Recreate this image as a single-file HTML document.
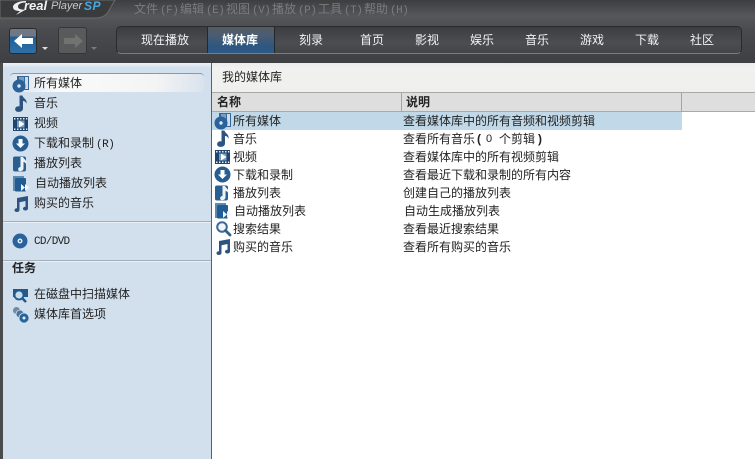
<!DOCTYPE html>
<html lang="zh"><head><meta charset="utf-8"><style>
html,body{margin:0;padding:0}
body{width:755px;height:459px;overflow:hidden;position:relative;background:#fff;font:12px/16px "Liberation Sans","WenQuanYi Zen Hei","Noto Sans CJK SC",sans-serif;color:#222}
.a{position:absolute;white-space:nowrap}
.t{position:absolute;white-space:nowrap;height:16px}
.n{position:absolute;top:32px;width:60px;text-align:center;color:#f2f2f2;white-space:nowrap}
.m{position:absolute;top:1px;color:#7a7c7e;white-space:nowrap}
.l{font:11px/16px "Liberation Mono",monospace;letter-spacing:-.5px;margin-left:2px}
svg{position:absolute;overflow:visible}
</style></head><body>
<!-- header -->
<div class="a" style="left:0;top:0;width:755px;height:63px;background:linear-gradient(#3d3e40 0,#55575a 16px,#4a4b4e 30px,#3e3f42 63px)"></div>
<svg style="left:0;top:0" width="125" height="22"><path d="M0 0H115L108 12Q104 18 96 18H0Z" fill="#3a3b3d" stroke="#68696b" stroke-width="1"/></svg>
<svg style="left:12px;top:0" width="24" height="18"><path d="M14 1C6 1 1 4 1 7C1 10 4 11 8 11L4 15L14 9.500C9 10 6 9 6 6.500C6 4 9 2.500 14 2.500Z" fill="#eee"/></svg>
<div class="a" style="left:24px;top:-2px;font:italic bold 13px/16px 'Liberation Sans',sans-serif;color:#f4f4f4">real</div>
<div class="a" style="left:51px;top:-2px;font:italic 11px/16px 'Liberation Sans',sans-serif;color:#c8c9ca">Player</div>
<div class="a" style="left:84px;top:-2px;font:italic bold 12px/16px 'Liberation Sans',sans-serif;color:#48a8de;letter-spacing:.5px">SP</div>
<div class="m" style="left:134px">文件<span class="l">(F)</span></div><div class="m" style="left:180px">编辑<span class="l">(E)</span></div><div class="m" style="left:226px">视图<span class="l">(V)</span></div><div class="m" style="left:272px">播放<span class="l">(P)</span></div><div class="m" style="left:318px">工具<span class="l">(T)</span></div><div class="m" style="left:364px">帮助<span class="l">(H)</span></div>
<!-- back/forward -->
<div class="a" style="left:9px;top:28px;width:28px;height:26px;box-sizing:border-box;border:1px solid #2b2b2b;border-radius:3px;background:linear-gradient(#6f7883 0,#6f7883 7px,#1f5f99 8px,#2f70a8 25px)"></div>
<svg style="left:13px;top:33px" width="21" height="16"><path d="M9 1L1 8L9 15V11H20V5H9Z" fill="#fff"/></svg>
<svg style="left:42px;top:47px" width="6" height="4"><path d="M0 0H6L3 3Z" fill="#ddd"/></svg>
<div class="a" style="left:58px;top:27px;width:29px;height:27px;box-sizing:border-box;border:1px solid #363636;border-radius:3px;background:#585a5b"></div>
<svg style="left:63px;top:33px" width="21" height="16"><path d="M12 1L20 8L12 15V11H1V5H12Z" fill="#717371"/></svg>
<svg style="left:91px;top:47px" width="6" height="4"><path d="M0 0H6L3 3Z" fill="#77797b"/></svg>
<!-- nav bar -->
<div class="a" style="left:116px;top:26px;width:626px;height:28px;box-sizing:border-box;border:1px solid #2a2b2d;border-bottom:1px solid #7b7c7e;border-radius:5px;background:linear-gradient(#3c3d40,#4b4d50 60%,#444548)"></div>
<div class="a" style="left:207px;top:27px;width:68px;height:26px;box-sizing:border-box;border-left:1px solid #25282b;border-right:1px solid #25282b;background:linear-gradient(#565b61 0,#4b5d72 8px,#2c5781 20px,#2f5a84 26px)"></div>
<div class="n" style="left:135px">现在播放</div><div class="n" style="left:210px;font-weight:bold;color:#fff">媒体库</div><div class="n" style="left:281px">刻录</div><div class="n" style="left:342px">首页</div><div class="n" style="left:397px">影视</div><div class="n" style="left:452px">娱乐</div><div class="n" style="left:507px">音乐</div><div class="n" style="left:562px">游戏</div><div class="n" style="left:617px">下载</div><div class="n" style="left:672px">社区</div>
<!-- sidebar -->
<div class="a" style="left:0;top:63px;width:3px;height:396px;background:#4a4b4d"></div>
<div class="a" style="left:3px;top:63px;width:208px;height:396px;background:#d2e0ee"></div>
<div class="a" style="left:3px;top:63px;width:208px;height:5px;background:linear-gradient(#eef1f4,#d2e0ee)"></div>
<div class="a" style="left:211px;top:63px;width:1px;height:396px;background:#5d6166"></div>
<div class="a" style="left:10px;top:73px;width:194px;height:19px;box-sizing:border-box;border-top:1px solid #8f979f;border-radius:4px;background:linear-gradient(90deg,#d9e3ed,#fafafa 25%,#f4f4f4 75%,#d9e3ed)"></div>
<div class="a" style="left:3px;top:221px;width:208px;height:1px;background:#a3afbb"></div><div class="a" style="left:3px;top:222px;width:208px;height:1px;background:#e7eef5"></div>
<div class="a" style="left:3px;top:260px;width:208px;height:1px;background:#a3afbb"></div><div class="a" style="left:3px;top:261px;width:208px;height:1px;background:#e7eef5"></div>
<div class="t" style="left:34px;top:75px">所有媒体</div><div class="t" style="left:34px;top:95px">音乐</div><div class="t" style="left:34px;top:115px">视频</div><div class="t" style="left:34px;top:135px">下载和录制<span class="l">(R)</span></div><div class="t" style="left:34px;top:155px">播放列表</div><div class="t" style="left:35px;top:175px">自动播放列表</div><div class="t" style="left:34px;top:195px">购买的音乐</div>
<div class="t" style="left:34px;top:234px;font:11px/16px 'Liberation Mono',monospace;letter-spacing:-.7px">CD/DVD</div>
<div class="t" style="left:12px;top:260px;font-weight:bold">任务</div>
<div class="t" style="left:34px;top:286px">在磁盘中扫描媒体</div><div class="t" style="left:34px;top:306px">媒体库首选项</div>
<!-- main -->
<div class="a" style="left:212px;top:63px;width:543px;height:29px;background:linear-gradient(#e9ebee 0,#f1f1ef 5px,#efefed)"></div>
<div class="a" style="left:212px;top:92px;width:543px;height:20px;box-sizing:border-box;border-top:1px solid #a9a9a5;border-bottom:1px solid #a9a9a5;background:#dedede"></div>
<div class="a" style="left:401px;top:92px;width:1px;height:20px;background:#a5a5a0"></div><div class="a" style="left:681px;top:92px;width:1px;height:20px;background:#a5a5a0"></div>
<div class="a" style="left:212px;top:112px;width:470px;height:18px;background:#c0d8e8"></div>
<div class="t" style="left:222px;top:69px">我的媒体库</div>
<div class="t" style="left:217px;top:94px;font-weight:bold">名称</div><div class="t" style="left:406px;top:94px;font-weight:bold">说明</div>
<div class="t" style="left:233px;top:113px">所有媒体</div><div class="t" style="left:403px;top:113px">查看媒体库中的所有音频和视频剪辑</div>
<div class="t" style="left:233px;top:131px">音乐</div><div class="t" style="left:403px;top:131px">查看所有音乐</div><div class="t" style="left:477px;top:131px;font-weight:bold">(</div><div class="t" style="left:486px;top:131px;font:11px/16px 'Liberation Sans',sans-serif">0</div><div class="t" style="left:499px;top:131px">个剪辑</div><div class="t" style="left:538px;top:131px;font-weight:bold">)</div>
<div class="t" style="left:233px;top:149px">视频</div><div class="t" style="left:403px;top:149px">查看媒体库中的所有视频剪辑</div>
<div class="t" style="left:233px;top:167px">下载和录制</div><div class="t" style="left:403px;top:167px">查看最近下载和录制的所有内容</div>
<div class="t" style="left:233px;top:185px">播放列表</div><div class="t" style="left:403px;top:185px">创建自己的播放列表</div>
<div class="t" style="left:234px;top:203px">自动播放列表</div><div class="t" style="left:404px;top:203px">自动生成播放列表</div>
<div class="t" style="left:233px;top:221px">搜索结果</div><div class="t" style="left:403px;top:221px">查看最近搜索结果</div>
<div class="t" style="left:233px;top:239px">购买的音乐</div><div class="t" style="left:403px;top:239px">查看所有购买的音乐</div>
<!-- icons -->
<svg width="0" height="0" style="left:0;top:0"><defs>
<g id="all"><rect x="5" y="1" width="12" height="14" fill="#35689a"/><path d="M13 2h3v12h-3z" fill="#cfdde9"/><path d="M7 2h5v5H7z" fill="#7c9dbc"/><circle cx="7" cy="11" r="6.500" fill="#2a6299"/><circle cx="7" cy="11" r="1.700" fill="#dce8f2"/></g>
<g id="mus"><path d="M6.500 0.500h3c.5 3 5 3.500 4 8.500C13 6.500 11 6 10 6V13.500C10 16 7.500 17.300 4.500 16.800C1.500 16.300 1.500 13 3.500 11.800C4.500 11.200 5.500 11.200 6.500 11.500Z" fill="#2d5480"/></g>
<g id="vid"><rect x="1" y="2" width="15" height="14" fill="#1d4670"/><path d="M2 3h1.500v1.500H2zM5 3h1.500v1.500H5zM8 3h1.500v1.500H8zM11 3h1.500v1.500H11zM14 3h1.300v1.500H14zM2 13.500h1.500V15H2zM5 13.500h1.500V15H5zM8 13.500h1.500V15H8zM11 13.500h1.500V15H11zM14 13.500h1.300V15H14z" fill="#e6eef5"/><path d="M5 5.500h7.500v7H5z" fill="#7f9fbd"/><path d="M7 5.500L12.500 9L7 12.500Z" fill="#fff"/></g>
<g id="dl"><circle cx="8.500" cy="8.500" r="8" fill="#275d92"/><path d="M6.500 4h4v4.500h2.500L8.500 13L4 8.500h2.500Z" fill="#fff"/></g>
<g id="pl"><rect x="1" y="1.500" width="13" height="15" rx="2" fill="#2a5f92"/><path d="M8.500 2h2.500c.5 2 4.500 3 3.500 8c-.5-2-2-3-3-3v6.500c0 2.500-4 3.500-5 2c-1-2 .5-3.500 2-3.500Z" fill="#eef3f8"/></g>
<g id="apl"><path d="M1 1h11v2H3.500v13H1Z" fill="#5f8ab0"/><rect x="3" y="3" width="11" height="13.500" rx="1" fill="#215c93"/><path d="M9 9L13 12.500L9 16ZM13 9L17 12.500L13 16Z" fill="#f2f6fa"/></g>
<g id="buy"><path d="M5 3L16 1V13.500C16 15.800 11.500 16.300 11 14C10.800 12.500 12.200 11.600 13.500 11.700V6L7.500 7.200V15C7.500 17.300 3 17.800 2.500 15.500C2.300 14 3.700 13.100 5 13.200Z" fill="#2d5480"/></g>
<g id="srch"><circle cx="7" cy="7" r="4.800" fill="#f0f5f9" stroke="#3b6b98" stroke-width="2"/><path d="M10.500 10.500L15 15" stroke="#35618c" stroke-width="2.800" stroke-linecap="round"/></g>
</defs></svg>
<svg style="left:12px;top:75px" width="18" height="18"><use href="#all"/></svg>
<svg style="left:13px;top:95px" width="18" height="18"><use href="#mus"/></svg>
<svg style="left:12px;top:115px" width="18" height="18"><use href="#vid"/></svg>
<svg style="left:12px;top:135px" width="18" height="18"><use href="#dl"/></svg>
<svg style="left:12px;top:155px" width="18" height="18"><use href="#pl"/></svg>
<svg style="left:12px;top:175px" width="18" height="18"><use href="#apl"/></svg>
<svg style="left:12px;top:195px" width="18" height="18"><use href="#buy"/></svg>
<svg style="left:12px;top:233px" width="18" height="18"><circle cx="8" cy="8" r="7.500" fill="#2a639b"/><circle cx="8" cy="8" r="2.500" fill="#e4edf5"/><circle cx="8" cy="8" r="1" fill="#2a639b"/></svg>
<svg style="left:12px;top:286px" width="18" height="18"><path d="M1 3H16V11H1Z" fill="#215a8f"/><circle cx="7" cy="9" r="4.500" fill="#c9dcec" stroke="#215a8f" stroke-width="1.800"/><path d="M10 12L14 16" stroke="#215a8f" stroke-width="2.500"/></svg>
<svg style="left:12px;top:306px" width="18" height="18"><circle cx="4.500" cy="4.500" r="3.500" fill="#6d8aa6"/><circle cx="8" cy="8" r="4" fill="#4f7499" stroke="#d2e0ee" stroke-width=".8"/><circle cx="12" cy="12" r="5" fill="#24659e" stroke="#d2e0ee" stroke-width=".8"/><circle cx="12" cy="12" r="1.500" fill="#e6eff6"/></svg>
<svg style="left:214px;top:112px" width="18" height="18"><use href="#all"/></svg>
<svg style="left:215px;top:130px" width="18" height="18"><use href="#mus"/></svg>
<svg style="left:214px;top:148px" width="18" height="18"><use href="#vid"/></svg>
<svg style="left:214px;top:166px" width="18" height="18"><use href="#dl"/></svg>
<svg style="left:214px;top:184px" width="18" height="18"><use href="#pl"/></svg>
<svg style="left:214px;top:202px" width="18" height="18"><use href="#apl"/></svg>
<svg style="left:215px;top:220px" width="18" height="18"><use href="#srch"/></svg>
<svg style="left:214px;top:238px" width="18" height="18"><use href="#buy"/></svg>
</body></html>
